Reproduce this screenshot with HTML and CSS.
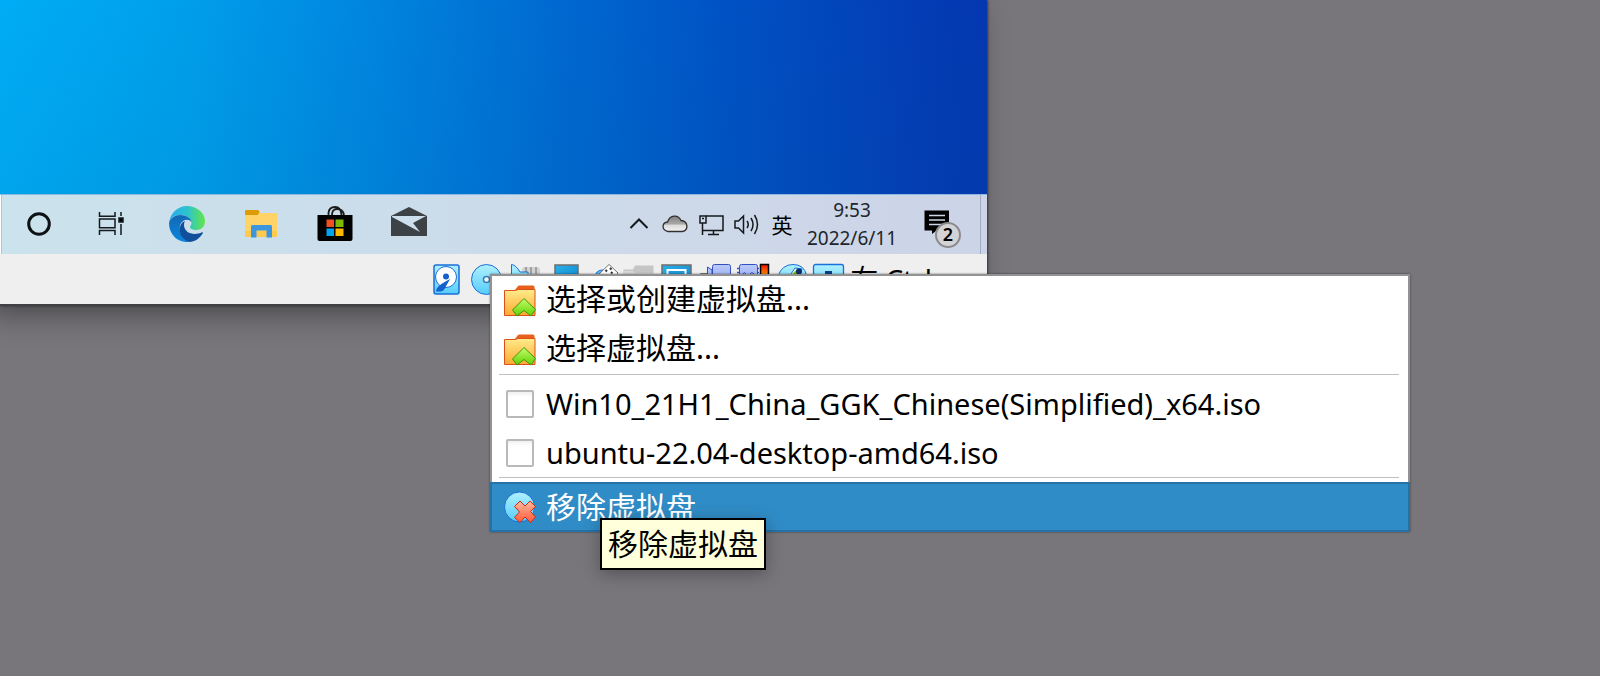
FILE: index.html
```
<!DOCTYPE html>
<html lang="zh-CN">
<head>
    <meta charset="UTF-8">
    <meta name="viewport" content="width=device-width, initial-scale=1">
    <title>虚拟盘</title>
    <link rel="stylesheet" href="styles.css">
</head>
<body>

<!-- shared gradients and icons -->
<svg class="defs" width="0" height="0" aria-hidden="true">
    <defs>
        <linearGradient id="cyan" x1="0" y1="0" x2="0" y2="1">
            <stop offset="0" stop-color="#b0f0ff"/>
            <stop offset="1" stop-color="#55cdfb"/>
        </linearGradient>
        <linearGradient id="orange" x1="0" y1="0" x2="0" y2="1">
            <stop offset="0" stop-color="#ffec8a"/>
            <stop offset="1" stop-color="#ffa832"/>
        </linearGradient>
        <linearGradient id="green" x1="0" y1="0" x2="0" y2="1">
            <stop offset="0" stop-color="#c2ff6a"/>
            <stop offset="1" stop-color="#62d000"/>
        </linearGradient>
        <linearGradient id="red" x1="0" y1="0" x2="0" y2="1">
            <stop offset="0" stop-color="#ffb9a0"/>
            <stop offset="1" stop-color="#ff5a38"/>
        </linearGradient>
        <linearGradient id="screen" x1="0" y1="0" x2="1" y2="1">
            <stop offset="0" stop-color="#2bb0e8"/>
            <stop offset="1" stop-color="#0c85cf"/>
        </linearGradient>
        <linearGradient id="violet" x1="0" y1="0" x2="0" y2="1">
            <stop offset="0" stop-color="#bccbfb"/>
            <stop offset="1" stop-color="#7f97ee"/>
        </linearGradient>
        <linearGradient id="heat" x1="0" y1="0" x2="0" y2="1">
            <stop offset="0" stop-color="#e81000"/>
            <stop offset="0.4" stop-color="#ff9a00"/>
            <stop offset="1" stop-color="#ffe000"/>
        </linearGradient>
        <linearGradient id="edge-top" x1="0" y1="0" x2="1" y2="0">
            <stop offset="0" stop-color="#2ba9ea"/>
            <stop offset="0.5" stop-color="#2cc3d0"/>
            <stop offset="1" stop-color="#62e648"/>
        </linearGradient>
        <linearGradient id="edge-left" x1="0" y1="0" x2="0" y2="1">
            <stop offset="0" stop-color="#1368b4"/>
            <stop offset="1" stop-color="#0a86de"/>
        </linearGradient>
        <linearGradient id="cloud" x1="0" y1="0" x2="0" y2="1">
            <stop offset="0" stop-color="#808080"/>
            <stop offset="0.5" stop-color="#a8a8a8"/>
            <stop offset="0.6" stop-color="#dcdcdc"/>
            <stop offset="1" stop-color="#f2f2f2"/>
        </linearGradient>
        <symbol id="folder-up" viewBox="0 0 32 32">
            <path d="M11 5 L14 1 Q14.500 0.500 15 0.500 H29 Q30.500 0.500 30.500 2 V7 H11 Z" fill="#e8601c"/>
            <path d="M0.500 5.500 H11 L14 4.500 H31 V30.500 H0.500 Z" fill="url(#orange)" stroke="#d9501a"/>
            <path d="M20 13.500 L31.500 24.500 L27 31 L20 25.500 L13 31 L8.500 25 Z" fill="url(#green)" stroke="#3f9410"/>
        </symbol>
    </defs>
</svg>

<div class="vm-window">
    <div class="wallpaper"></div>

    <div class="taskbar">
        <div class="search-end"></div>
        <div class="apps">
            <button type="button" aria-label="Cortana">
                <svg width="36" height="36" viewBox="0 0 36 36"><circle cx="18" cy="18" r="10.300" fill="none" stroke="#0d1114" stroke-width="3"/></svg>
            </button>
            <button type="button" aria-label="任务视图">
                <svg width="36" height="36" viewBox="0 0 36 36" fill="none" stroke="#15191c" stroke-width="1.500">
                    <path d="M4.500 6 V10.200 H20 V6 M4.500 29 V24.500 H20 V29 M4.500 13 H20 V21.800 H4.500 Z M26 6 V10 M26 18 V29"/>
                    <path d="M24 12 H28 V16 H24 Z" fill="#000"/>
                </svg>
            </button>
            <button type="button" aria-label="Edge">
                <svg width="36" height="36" viewBox="0 0 36 36">
                    <path d="M0 17 C1 7 9 0 18 0 C28 0 36 7 36 15 C36 21 32 24 27 24 C23 24 21 22 21 21 C21 20 22.500 19 22.500 17 C22 12 17 9 11 9 C5 9 1 12 0 17 Z" fill="url(#edge-top)"/>
                    <path d="M0 17 C1 12 6 9 11 9 C18 9 22.500 13 22.500 16 C20 12.500 14 13 11.500 18 C9 24 13 33 20 36 C8 37 0 28 0 17 Z" fill="url(#edge-left)"/>
                    <path d="M16 15 C8 18 9 32 20 36 C26 36 31 32 34 27 C34 26 33 26 32.500 26.500 C25 30 15 27 15 19 C15 17 15.500 16 16 15 Z" fill="#104f9b"/>
                </svg>
            </button>
            <button type="button" aria-label="文件资源管理器">
                <svg width="36" height="36" viewBox="0 0 36 36">
                    <path d="M2 5 H15 L17 7 H33 Q34 7 34 8 V31 H2 Z" fill="#ffd367"/>
                    <path d="M2 5 Q2 4 3 4 H15 Q16 4 16.500 6 L15 9 H2 Z" fill="#dd9b05"/>
                    <path d="M2 25 H34 V31 H2 Z" fill="#ffc94b"/>
                    <path d="M8 31.500 V20.500 Q8 19 9.500 19 H27.500 Q29 19 29 20.500 V31.500 H23.500 V24.500 H13.500 V31.500 Z" fill="#3c96dd"/>
                </svg>
            </button>
            <button type="button" aria-label="Microsoft Store">
                <svg width="36" height="36" viewBox="0 0 36 36">
                    <path d="M11.500 9 V7 Q12 1 18 1 Q24 1 24.500 9 M15 9 Q15 3 20 3 Q26 3 27 9" fill="none" stroke="#1b1b1b" stroke-width="1.800"/>
                    <path d="M0.500 9 H35.500 V33 Q35.500 35 33.500 35 H2.500 Q0.500 35 0.500 33 Z" fill="#000"/>
                    <path d="M9.500 13.500 H17 V21 H9.500 Z" fill="#f25022"/>
                    <path d="M18.500 13.500 H26.500 V21 H18.500 Z" fill="#7fba00"/>
                    <path d="M9.500 22.500 H17 V30 H9.500 Z" fill="#00a4ef"/>
                    <path d="M18.500 22.500 H26.500 V30 H18.500 Z" fill="#ffb900"/>
                </svg>
            </button>
            <button type="button" aria-label="邮件">
                <svg width="36" height="36" viewBox="0 0 36 36">
                    <path d="M0 10 L18 1 L36 10 V30 H0 Z" fill="#3c4246"/>
                    <path d="M1 10 H35 L22 17 L29 26 L1 11 Z" fill="#cddeec"/>
                </svg>
            </button>
        </div>

        <div class="tray">
            <button type="button" aria-label="显示隐藏的图标">
                <svg width="24" height="24" viewBox="0 0 24 24"><path d="M3.500 16 L12 7.500 L20.500 16" fill="none" stroke="#15191c" stroke-width="2"/></svg>
            </button>
            <button type="button" aria-label="OneDrive">
                <svg width="26" height="24" viewBox="0 0 26 24"><path d="M6 19.500 C-1 18 0 10.500 5.500 10 C8 3 16 2 19 8.500 C26 9 27 18 20.500 19.500 Z" fill="url(#cloud)" stroke="#303030" stroke-width="1.300"/></svg>
            </button>
            <button type="button" aria-label="网络">
                <svg width="26" height="24" viewBox="0 0 26 24" fill="none" stroke="#15191c" stroke-width="1.500">
                    <path d="M8 4 H25 V18.500 H5 M15.500 18.500 V22 M10 22.500 H21"/>
                    <path d="M2 4 H8 V11 H2 Z M4.500 11 V23 M4 6.500 H6"/>
                </svg>
            </button>
            <button type="button" aria-label="音量">
                <svg width="26" height="24" viewBox="0 0 26 24" fill="none" stroke="#15191c" stroke-width="1.500">
                    <path d="M1 9 H4.500 L9.500 4 V21 L4.500 16 H1 Z"/>
                    <path d="M13 9 Q15.500 12.500 13 16 M17 6 Q21 12.500 17 19 M20.500 3 Q26.500 12.500 20.500 22"/>
                </svg>
            </button>
            <button type="button" class="ime">英</button>
            <button type="button" class="clock"><span>9:53</span><span>2022/6/11</span></button>
            <button type="button" class="notices" aria-label="通知">
                <svg width="26" height="26" viewBox="0 0 26 26">
                    <path d="M0.500 0.500 H25 V20.500 H12.500 L8 24 V20.500 H0.500 Z" fill="#000"/>
                    <path d="M5 5.500 H21 M5 10 H21 M5 14.500 H21" stroke="#cdd6e8" stroke-width="1.600"/>
                </svg>
                <span class="badge">2</span>
            </button>
            <div class="show-desktop"></div>
        </div>
    </div>

    <div class="statusbar">
        <svg width="38" height="32" viewBox="0 0 38 32">
            <rect x="6" y="2" width="25" height="29" rx="2" fill="url(#cyan)" stroke="#1a6fd8" stroke-width="1.500"/>
            <circle cx="18" cy="14" r="10.500" fill="#fff" stroke="#1a6fd8"/>
            <circle cx="18" cy="13.500" r="3" fill="#1261cc"/>
            <path d="M22.500 15.500 C20 18 12 20 8.500 26 L8 28.500 H13 C17 28 18 22 22.500 15.500 Z" fill="#1261cc"/>
        </svg>
        <svg width="38" height="32" viewBox="0 0 38 32">
            <circle cx="20.500" cy="16.500" r="15" fill="url(#cyan)" stroke="#1a6fd8"/>
            <circle cx="20.500" cy="16.500" r="3" fill="#e9fbff" stroke="#3f7cb4" stroke-width="1.500"/>
        </svg>
        <svg width="38" height="32" viewBox="0 0 38 32">
            <path d="M18 13 V7 Q18 4 21 4 H33 Q36 4 36 7 V13 Z" fill="#d2d2d2"/>
            <path d="M22 4 V13 M27 4 V13 M32 4 V13" stroke="#909090" stroke-width="1.500"/>
            <path d="M7.500 1.500 Q12 2 16 9 H24 V20 H16 L7.500 30 Z" fill="url(#cyan)" stroke="#1a6fd8"/>
        </svg>
        <svg width="38" height="32" viewBox="0 0 38 32">
            <rect x="13" y="2" width="23" height="20" fill="url(#screen)" stroke="#6d6d6d" stroke-width="1.500"/>
            <path d="M20 22 H29 V28 H20 Z" fill="#8a8a8a"/>
        </svg>
        <svg width="38" height="32" viewBox="0 0 38 32">
            <circle cx="22" cy="14" r="7" fill="#59b7f3" stroke="#1a6fd8"/>
            <path d="M29 1.500 L38 10 L25 23 L16 14 Z" fill="#fff" stroke="#707070"/>
            <path d="M25.500 7 L27 8.500 M30 5 L31.500 6.500 M31 9 L32.500 10.500" stroke="#333" stroke-width="2"/>
        </svg>
        <svg width="38" height="32" viewBox="0 0 38 32">
            <path d="M5.500 6.500 H15 L17 2.500 H35.500 V29 H5.500 Z" fill="#c5c5c5"/>
            <path d="M5.500 8 H15 L18 10 H35.500 V29 H5.500 Z" fill="#d9d9d9"/>
        </svg>
        <svg width="38" height="32" viewBox="0 0 38 32">
            <rect x="6" y="2" width="29" height="24" fill="url(#screen)" stroke="#6d6d6d" stroke-width="1.500"/>
            <rect x="11.500" y="7" width="18" height="14" fill="#1c9bde" stroke="#fff" stroke-width="2"/>
        </svg>
        <svg width="38" height="32" viewBox="0 0 38 32">
            <path d="M6.500 10.500 H14 V22 H6.500 Z" fill="#ddd" stroke="#777"/>
            <path d="M13.500 4 L18 7 V24 L13.500 26 Z" fill="url(#violet)" stroke="#3350c0"/>
            <rect x="18.500" y="1.500" width="18" height="25" rx="2" fill="url(#violet)" stroke="#3350c0"/>
        </svg>
        <svg width="38" height="32" viewBox="0 0 38 32">
            <path d="M5 5.500 H27 M5 9.500 H27" stroke="#3350c0" stroke-width="1.500"/>
            <rect x="7.500" y="1.500" width="18" height="25" rx="2" fill="url(#violet)" stroke="#3350c0"/>
            <path d="M11 11 Q12 8 14 11 M18 11 Q20 8 22 11" fill="none" stroke="#3350c0"/>
            <rect x="28.500" y="1.500" width="8" height="28" fill="url(#heat)" stroke="#000" stroke-width="1.500"/>
        </svg>
        <svg width="38" height="32" viewBox="0 0 38 32">
            <path d="M8 13 Q12 1.500 23 1.500 Q34 1.500 36.500 12 Q36 26 23 28 Q11 26 8 13 Z" fill="url(#cyan)" stroke="#1a6fd8"/>
            <path d="M19 14 L25 5 L32 6 L27 14 Z" fill="#fff" stroke="#1a6fd8"/>
            <path d="M22 14 L28 8" stroke="#7ec413" stroke-width="4"/>
            <circle cx="29" cy="8.500" r="3" fill="#0e2d6c"/>
        </svg>
        <svg width="38" height="32" viewBox="0 0 38 32">
            <rect x="5.500" y="1.500" width="30" height="28" rx="2" fill="url(#cyan)" stroke="#1a6fd8" stroke-width="1.300"/>
            <path d="M17 8 H24 V16 H28 L20.500 23 L13 16 H17 Z" fill="#0b3f8c"/>
        </svg>
        <span class="host-key">右 Ctrl</span>
    </div>
</div>

<div class="menu">
    <button type="button" class="item choose">
        <svg width="32" height="32"><use href="#folder-up"/></svg>
        <span>选择或创建虚拟盘...</span>
    </button>
    <button type="button" class="item choose">
        <svg width="32" height="32"><use href="#folder-up"/></svg>
        <span>选择虚拟盘...</span>
    </button>
    <hr>
    <label class="item disc" for="iso-win10">
        <input type="checkbox" id="iso-win10">
        <span>Win10_21H1_China_GGK_Chinese(Simplified)_x64.iso</span>
    </label>
    <label class="item disc" for="iso-ubuntu">
        <input type="checkbox" id="iso-ubuntu">
        <span>ubuntu-22.04-desktop-amd64.iso</span>
    </label>
    <hr>
    <button type="button" class="item selected">
        <svg width="32" height="32" viewBox="0 0 32 32">
            <circle cx="15.500" cy="16" r="15" fill="url(#cyan)" stroke="#1a6fd8"/>
            <path d="M16 10 L21 15 L26 10 L31.500 15.500 L26.500 20.500 L31.500 26 L26.500 31.500 L21 26 L16 31.500 L10.500 26.500 L15.500 21 L10.500 15.500 Z" fill="url(#red)" stroke="#d42a0c"/>
        </svg>
        <span>移除虚拟盘</span>
    </button>
</div>

<div class="tooltip" role="tooltip">移除虚拟盘</div>

</body>
</html>
```
FILE: styles.css
```
* {
  box-sizing: border-box;
}

body {
  margin: 0;
  min-height: 100vh;
  background: #78767b;
  color: #000;
  font-family: "Noto Sans", "Noto Sans CJK SC", sans-serif;
  overflow: hidden;
}

button {
  margin: 0;
  padding: 0;
  border: 0;
  background: none;
  color: inherit;
  font: inherit;
}

svg {
  display: block;
  flex: none;
}

.defs {
  position: absolute;
}

/* Virtual machine window */
.vm-window {
  width: calc(100% - 613px);
  border-bottom: 2px solid #414043;
  box-shadow: 1px 0 2px rgba(0, 0, 0, 0.5), -12px 6px 30px rgba(0, 0, 0, 0.45);
}

.wallpaper {
  height: 194px;
  background:
    linear-gradient(180deg, transparent, rgba(0, 60, 120, 0.08)),
    linear-gradient(84deg, #00aef6 0%, #009feb 20%, #0086df 38%, #006bd2 56%, #0052c4 74%, #0340b8 90%, #0437b0 100%);
}

.taskbar {
  display: flex;
  height: 60px;
  border-top: 1px solid #8cb8e2;
  background: linear-gradient(90deg, #cbe3ec, #cbdeeb 30%, #cdd9e9 65%, #ccd4e8);
}

.search-end {
  width: 2px;
  background: #fff;
  border-right: 1px solid #b9c4c9;
}

.apps {
  display: flex;
}

.apps button,
.tray button {
  display: flex;
  align-items: center;
  justify-content: center;
  padding-bottom: 2px;
}

.apps button {
  width: 74px;
}

.tray {
  display: flex;
  margin-left: auto;
}

.tray button {
  width: 36px;
}

.tray .ime {
  width: 34px;
  font-family: "Noto Sans CJK SC", sans-serif;
  font-size: 21px;
}

.tray .clock {
  flex-direction: column;
  width: 106px;
  color: #22262a;
  font-size: 19px;
  line-height: 28px;
}

.tray .notices {
  position: relative;
  width: 75px;
  padding: 0 11px 4px 0;
}

.badge {
  position: absolute;
  top: 27px;
  left: 30px;
  width: 26px;
  height: 26px;
  border: 2px solid #8b8b8d;
  border-radius: 50%;
  background: #d3d3d5;
  font-size: 18px;
  font-weight: 600;
  line-height: 21px;
  text-align: center;
}

.show-desktop {
  width: 7px;
  border-left: 1px solid #a3adbd;
}

.statusbar {
  display: flex;
  align-items: center;
  justify-content: flex-end;
  height: 50px;
  padding-right: 55px;
  background: #efefef;
}

.host-key {
  margin-left: 4px;
  font-size: 28px;
  line-height: 32px;
  white-space: nowrap;
}

/* Disc menu */
.menu {
  position: absolute;
  top: 274px;
  left: 490px;
  right: 190px;
  border: 2px solid #929292;
  background: #fff;
  box-shadow: 0 0 2px rgba(0, 0, 0, 0.5);
}

.item {
  display: flex;
  align-items: center;
  gap: 10px;
  width: 100%;
  height: 49px;
  padding: 0 12px;
  font-size: 30px;
  line-height: 40px;
  white-space: nowrap;
}

.choose span {
  padding-bottom: 4px;
}

.disc {
  font-size: 29px;
}

.item input {
  appearance: none;
  flex: none;
  width: 28px;
  height: 28px;
  margin: 0 2px;
  border: 2px solid #b9b9b9;
  border-radius: 2px;
  background: linear-gradient(#f0f0f0, #fff 5px);
}

.menu hr {
  height: 1px;
  margin: 0 9px 4px 7px;
  border: 0;
  background: #c0c0c0;
}

.menu .selected {
  width: calc(100% + 4px);
  height: 50px;
  margin: 0 -2px -2px;
  border: 2px solid #2672a5;
  background: #308cc6;
  color: #fff;
}

.tooltip {
  position: absolute;
  top: 518px;
  left: 600px;
  padding: 4px 6px;
  border: 2px solid #000;
  background: #ffffdc;
  box-shadow: 0 4px 16px rgba(0, 0, 0, 0.3);
  font-size: 30px;
  line-height: 40px;
}
```
